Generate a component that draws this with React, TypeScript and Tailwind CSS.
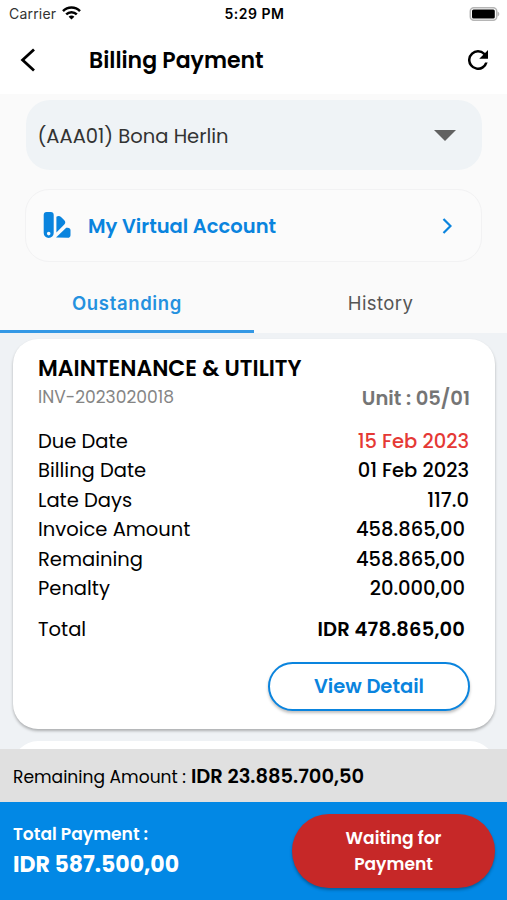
import { useState } from 'react';

const rows = [
  { label: 'Due Date', value: '15 Feb 2023', valueClass: 'text-[#e53935]' },
  { label: 'Billing Date', value: '01 Feb 2023', valueClass: '' },
  { label: 'Late Days', value: '117.0', valueClass: '' },
  { label: 'Invoice Amount', value: '458.865,00', valueClass: 'pr-1' },
  { label: 'Remaining', value: '458.865,00', valueClass: 'pr-1' },
  { label: 'Penalty', value: '20.000,00', valueClass: 'pr-1' },
];

function StatusBar() {
  return (
    <div className="grid h-7 grid-cols-3 items-center pl-[9px] pr-[7px] font-['Inter',sans-serif] text-[14px] leading-none">
      <div className="flex items-center gap-[6px]">
        <span className="tracking-[0.2px] text-[#333]">Carrier</span>
        <svg width="19" height="14" viewBox="0 0 19 14" fill="none" stroke="#000" strokeWidth="2.5" className="mt-[-2px]">
          <path d="M1 5.1C5.7.4 13.3.4 18 5.1" />
          <path d="M4.2 8.4c2.9-2.9 7.7-2.9 10.6 0" />
          <path d="M9.5 13.6 6.6 10.7c1.6-1.6 4.2-1.6 5.8 0z" fill="#000" stroke="none" />
        </svg>
      </div>
      <span className="text-center font-semibold tracking-[0.5px]">5:29 PM</span>
      <div className="flex justify-end">
        <svg width="31" height="14" viewBox="0 0 31 14" className="mt-[-1px]">
          <rect x="1.3" y="0.8" width="26.4" height="12.4" rx="3.5" fill="#fff" stroke="#b5b5b5" strokeWidth="1.5" />
          <rect x="3" y="2.5" width="22.8" height="9" rx="1.5" />
          <path d="M28.5 4.5c2.4 1 2.4 4 0 5z" fill="#b5b5b5" />
        </svg>
      </div>
    </div>
  );
}

function AppBar() {
  return (
    <div className="flex h-[66px] items-center pl-5 pr-[19px]">
      <svg width="16" height="24" viewBox="0 0 16 24" fill="none" stroke="#000" strokeWidth="2.8" className="mt-[-2px]">
        <path d="M14 1.5 2.6 12 14 22.5" />
      </svg>
      <h1 className="ml-[53px] mt-[-2px] flex-1 text-[22px] font-semibold">Billing Payment</h1>
      <svg width="20" height="20" viewBox="4 4 16 16" className="mt-[-3px]">
        <path d="M17.65 6.35A7.96 7.96 0 0 0 12 4a8 8 0 1 0 7.73 10h-2.08A6 6 0 1 1 12 6c1.66 0 3.14.69 4.22 1.78L13 11h7V4z" />
      </svg>
    </div>
  );
}

function InvoiceCard() {
  return (
    <div className="h-[390px] rounded-[25px] bg-white px-[25px] pt-[15px] shadow-[0_2px_3px_rgba(0,0,0,0.28)]">
      <h2 className="text-[22px] font-semibold leading-[29px]">MAINTENANCE &amp; UTILITY</h2>
      <div className="flex justify-between">
        <span className="text-[17.1px] leading-[29px] text-[#858585]">INV-2023020018</span>
        <span className="pt-px text-[19.5px] font-semibold leading-[30px] text-[#757575]">Unit : 05/01</span>
      </div>
      <div className="mt-[13px]">
        {rows.map((row) => (
          <div key={row.label} className="flex h-[29.4px] items-center justify-between pr-px text-[19.5px]">
            <span>{row.label}</span>
            <span className={`font-medium ${row.valueClass}`}>{row.value}</span>
          </div>
        ))}
      </div>
      <div className="mt-[12px] flex h-[29px] items-center justify-between text-[19.5px]">
        <span>Total</span>
        <span className="pr-[5px] font-semibold tracking-[0.15px]">IDR 478.865,00</span>
      </div>
      <div className="mt-[18px] flex justify-end">
        <button className="h-[49px] w-[202px] rounded-full border-2 border-[#0a84de] bg-white text-[19.5px] font-semibold text-[#0a84de] shadow-[0_2px_3px_rgba(0,0,0,0.25)]">
          View Detail
        </button>
      </div>
    </div>
  );
}

export default function App() {
  const [tab, setTab] = useState('outstanding');

  return (
    <div className="flex h-[900px] w-[507px] flex-col overflow-hidden bg-white font-['Poppins','Inter',sans-serif] text-black">
      <StatusBar />
      <AppBar />

      <div className="h-[239px] shrink-0 bg-[#fafafa] pt-[6px]">
        <button className="mx-auto flex h-[70px] w-[456px] items-center justify-between rounded-[24px] bg-[#eff3f6] pl-3 pr-[26px] text-[19.5px] text-[#333]">
          <span className="pt-[3px]">(AAA01) Bona Herlin</span>
          <svg width="22" height="11" viewBox="0 0 22 11" fill="#616161">
            <path d="M0 0h22L11 11z" />
          </svg>
        </button>
        <button className="mx-auto mt-[19px] flex h-[73px] w-[457px] items-center rounded-[24px] border border-[#f2f2f3] bg-[#fbfbfb] pl-[17px] pr-[29px] text-[#0a84de]">
          <svg width="28" height="28" viewBox="0 0 28 28" fill="currentColor" className="mt-[-2px]">
            <path fillRule="evenodd" d="M3.6 1h4.2a2.9 2.9 0 0 1 2.9 2.9V22a5 5 0 0 1-10 0V3.9A2.9 2.9 0 0 1 3.6 1zm2.1 19.8a1.8 1.8 0 1 0 0 3.6 1.8 1.8 0 0 0 0-3.6z" />
            <path d="M13.4 5.8c1.6-1.3 3.4-1.1 4.9.4l3 3c1.3 1.4 1.3 3 0 4.3l-7.9 8z" />
            <path d="M13 26.6 23.2 16.8h1.5c1.8 0 2.8 1 2.8 2.8v4.3c0 1.8-1 2.9-2.8 2.9z" />
          </svg>
          <span className="ml-[17px] flex-1 pt-[3px] text-left text-[19.5px] font-semibold">My Virtual Account</span>
          <svg width="10" height="16" viewBox="0 0 10 16" fill="none" stroke="currentColor" strokeWidth="2.2">
            <path d="m1.5 1 7 7-7 7" />
          </svg>
        </button>
        <div className="mt-[11px] flex h-[60px] font-['Inter',sans-serif] text-[18.5px]">
          <button
            onClick={() => setTab('outstanding')}
            className={`w-[254px] border-b-3 pt-1 tracking-[0.65px] ${tab === 'outstanding' ? 'border-[#3398e5] font-semibold text-[#2491df]' : 'border-transparent text-[#555]'}`}
          >
            Oustanding
          </button>
          <button
            onClick={() => setTab('history')}
            className={`flex-1 border-b-3 pt-1 tracking-[0.4px] ${tab === 'history' ? 'border-[#3398e5] font-semibold text-[#2491df]' : 'border-transparent text-[#555]'}`}
          >
            History
          </button>
        </div>
      </div>

      <div className="h-[416px] shrink-0 overflow-hidden bg-[#eff2f5] pl-[13px] pr-[12px] pt-[6px]">
        <InvoiceCard />
        <div className="mt-3 h-[390px] rounded-[25px] bg-white" />
      </div>

      <div className="flex h-[53px] shrink-0 items-baseline bg-[#e0e0e0] pl-[13px] pt-[13px]">
        <span className="text-[17.1px]">Remaining Amount :</span>
        <span className="ml-[5px] text-[19.5px] font-semibold">IDR 23.885.700,50</span>
      </div>

      <div className="flex flex-1 items-center justify-between bg-[#0288e5] pl-[13px] pr-3 text-white">
        <div className="mt-[-2px]">
          <div className="text-[17.1px] font-semibold leading-[28px]">Total Payment :</div>
          <div className="text-[22px] font-bold leading-[33px]">IDR 587.500,00</div>
        </div>
        <button className="h-[74px] w-[203px] rounded-full bg-[#c62828] px-10 text-[17.1px] font-semibold leading-[26px] shadow-[0_2px_3px_rgba(0,0,0,0.3)]">
          Waiting for Payment
        </button>
      </div>
    </div>
  );
}
